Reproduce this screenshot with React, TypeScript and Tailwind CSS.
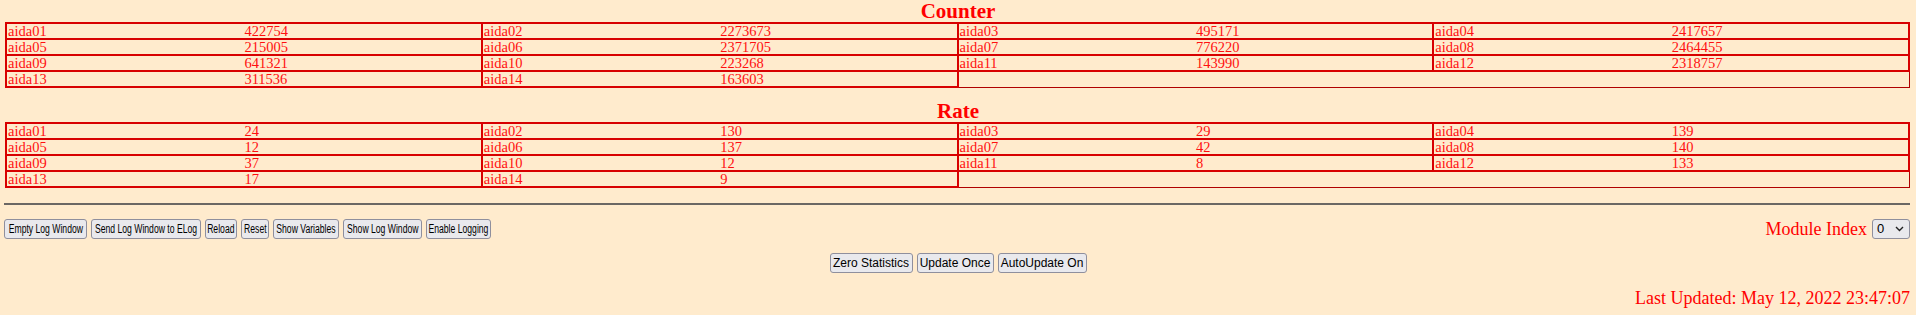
import React from 'react';

type Item = { name: string; value: string };

const counters: Item[] = [
  { name: 'aida01', value: '422754' },
  { name: 'aida02', value: '2273673' },
  { name: 'aida03', value: '495171' },
  { name: 'aida04', value: '2417657' },
  { name: 'aida05', value: '215005' },
  { name: 'aida06', value: '2371705' },
  { name: 'aida07', value: '776220' },
  { name: 'aida08', value: '2464455' },
  { name: 'aida09', value: '641321' },
  { name: 'aida10', value: '223268' },
  { name: 'aida11', value: '143990' },
  { name: 'aida12', value: '2318757' },
  { name: 'aida13', value: '311536' },
  { name: 'aida14', value: '163603' },
];

const rates: Item[] = [
  { name: 'aida01', value: '24' },
  { name: 'aida02', value: '130' },
  { name: 'aida03', value: '29' },
  { name: 'aida04', value: '139' },
  { name: 'aida05', value: '12' },
  { name: 'aida06', value: '137' },
  { name: 'aida07', value: '42' },
  { name: 'aida08', value: '140' },
  { name: 'aida09', value: '37' },
  { name: 'aida10', value: '12' },
  { name: 'aida11', value: '8' },
  { name: 'aida12', value: '133' },
  { name: 'aida13', value: '17' },
  { name: 'aida14', value: '9' },
];

const serif = { fontFamily: '"Liberation Serif", "Times New Roman", serif' };
const sans = { fontFamily: '"Liberation Sans", Arial, sans-serif' };

const StatTable: React.FC<{ items: Item[] }> = ({ items }) => {
  // rows of 4, last row padded with one empty cell spanning the rest
  const rows: Item[][] = [];
  for (let i = 0; i < items.length; i += 4) rows.push(items.slice(i, i + 4));

  return (
    <table className="w-[1905px] border-collapse table-fixed text-[14.5px] text-[#ff1010]" style={serif}>
      <tbody>
        {rows.map((row, ri) => (
          <tr key={ri}>
            {row.map((it) => (
              <td key={it.name} className="border-2 border-[#d80000] p-0">
                <div className="flex h-[14px] leading-[14px] pl-[1px]">
                  <span className="w-1/2">{it.name}</span>
                  <span className="w-1/2">{it.value}</span>
                </div>
              </td>
            ))}
            {row.length < 4 && (
              <td colSpan={4 - row.length} className="border border-[#b00000] p-0" />
            )}
          </tr>
        ))}
      </tbody>
    </table>
  );
};

const btn =
  'flex items-center justify-center h-[20px] px-0 bg-[#e9e9ed] border border-[#8f8f9d] rounded-[3px] text-black whitespace-nowrap overflow-visible';

// the top row uses a very narrow face in the original; squeeze the label to fit
const Tight: React.FC<{ w: string; label: string }> = ({ w, label }) => (
  <button className={`${btn} ${w}`}>
    <span className="inline-block scale-x-[0.69] text-[12.5px] leading-[18px]">{label}</span>
  </button>
);

export default function App() {
  return (
    <div className="min-h-[315px] w-[1916px] bg-[#ffebcd] px-[5px] pb-[6px]" style={serif}>
      <h3 className="h-[22px] leading-[22px] text-center text-[21px] font-bold text-[#ff0000]">Counter</h3>
      <StatTable items={counters} />

      <h3 className="mt-[12px] h-[22px] leading-[22px] text-center text-[21px] font-bold text-[#ff0000]">Rate</h3>
      <StatTable items={rates} />

      <div className="mt-[15px] -ml-[1px] w-[1906px] h-[2px] bg-[#6b6764]" />

      {/* action buttons + module selector */}
      <div className="mt-[14px] flex items-center justify-between -ml-[1px]">
        <div className="flex gap-[4px]" style={sans}>
          <Tight w="w-[83px]" label="Empty Log Window" />
          <Tight w="w-[110px]" label="Send Log Window to ELog" />
          <Tight w="w-[32px]" label="Reload" />
          <Tight w="w-[28px]" label="Reset" />
          <Tight w="w-[66px]" label="Show Variables" />
          <Tight w="w-[79px]" label="Show Log Window" />
          <Tight w="w-[65px]" label="Enable Logging" />
        </div>
        <div className="flex items-center gap-[5px] mr-[1px]">
          <span className="text-[18px] leading-[20px] text-[#ff0000]">Module Index</span>
          <div className="relative w-[38px] h-[20px] bg-[#e9e9ed] border border-[#8f8f9d] rounded-[3px] text-[13px] leading-[18px] pl-[4px] text-black" style={sans}>
            0
            <svg className="absolute right-[5px] top-[6px]" width="9" height="6" viewBox="0 0 9 6">
              <path d="M1 1 L4.5 4.5 L8 1" fill="none" stroke="#222" strokeWidth="1.4" />
            </svg>
          </div>
        </div>
      </div>

      <div className="mt-[14px] flex justify-center gap-[4px] text-[12px]" style={sans}>
        <button className={`${btn} h-[19px] leading-[17px] w-[83px]`}>Zero Statistics</button>
        <button className={`${btn} h-[19px] leading-[17px] w-[77px]`}>Update Once</button>
        <button className={`${btn} h-[19px] leading-[17px] w-[89px]`}>AutoUpdate On</button>
      </div>

      <div className="mt-[14px] h-[22px] leading-[22px] text-right pr-[1px] text-[18px] text-[#ff0000]">
        Last Updated: May 12, 2022 23:47:07
      </div>
    </div>
  );
}
